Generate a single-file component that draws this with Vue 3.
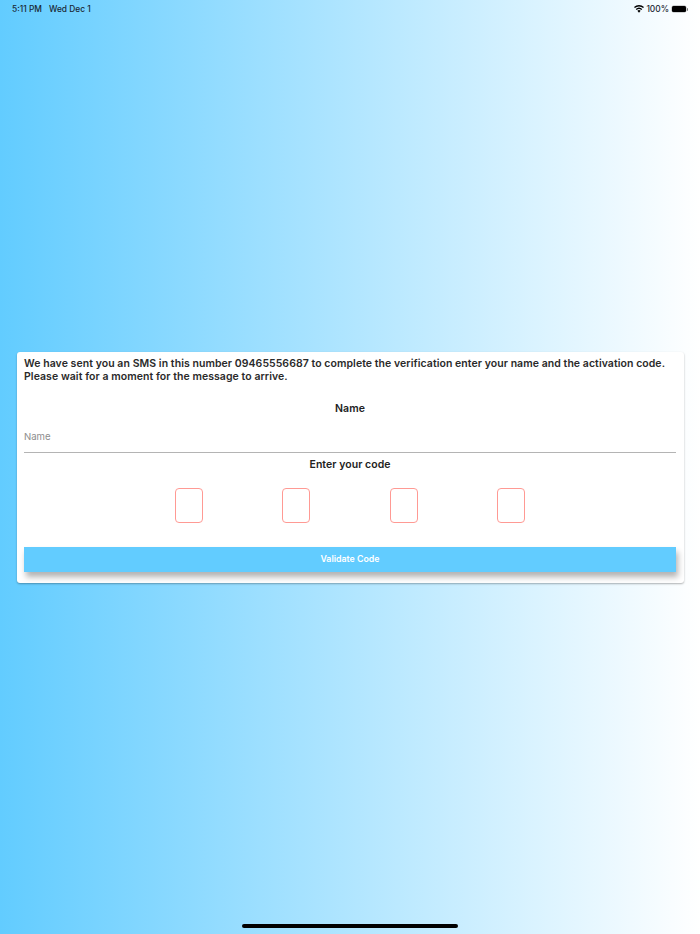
<script setup>
const boxes = [1, 2, 3, 4]
</script>

<template>
  <div class="page">
    <div class="status">
      <div class="status-left"><span>5:11 PM</span><span>Wed Dec 1</span></div>
      <div class="status-right">
        <svg class="wifi" width="10" height="8" viewBox="0 0 11 8">
          <path d="M5.5 8 3.7 5.9a2.7 2.7 0 0 1 3.6 0Z" fill="#000" />
          <path d="M1.9 3.9a5.3 5.3 0 0 1 7.2 0L8.1 5.1a3.8 3.8 0 0 0-5.2 0Z" fill="#000" />
          <path d="M0 1.9a8 8 0 0 1 11 0L10 3a6.5 6.5 0 0 0-9 0Z" fill="#000" />
        </svg>
        <span class="pct">100%</span>
        <span class="battery"></span>
        <span class="nub"></span>
      </div>
    </div>

    <div class="card">
      <p class="intro">We have sent you an SMS in this number 09465556687 to complete the verification enter your name and the activation code. Please wait for a moment for the message to arrive.</p>
      <h2 class="name-title">Name</h2>
      <input class="name-input" type="text" placeholder="Name" />
      <h2 class="code-title">Enter your code</h2>
      <div class="codes">
        <div class="code-cell" v-for="b in boxes" :key="b"><span class="code-box"></span></div>
      </div>
      <button class="validate">Validate Code</button>
    </div>

    <div class="home"></div>
  </div>
</template>

<style>
html, body { margin: 0; padding: 0; }
</style>

<style scoped>
.page {
  position: relative;
  width: 700px;
  height: 934px;
  overflow: hidden;
  display: flex;
  align-items: center;
  padding: 0 16px 0 17px;
  box-sizing: border-box;
  background: linear-gradient(90deg, #62ccff 0%, #ffffff 100%);
  font-family: Inter, "Liberation Sans", sans-serif;
  color: #222;
}
.status {
  position: absolute;
  top: 3px;
  left: 12px;
  right: 12px;
  height: 11px;
  display: flex;
  justify-content: space-between;
  align-items: center;
  font-size: 8.4px;
  line-height: 11px;
  font-weight: 500;
  color: #1a2733;
}
.status-left { display: flex; gap: 7px; padding-top: 1px; }
.status-right { display: flex; align-items: center; gap: 2px; padding-top: 1px; }
.pct { font-size: 8.4px; }
.battery {
  width: 14px;
  height: 6px;
  background: #000;
  border-radius: 1.5px;
  margin-left: 1px;
  box-shadow: 0 0 0 0.5px #00000055;
}
.nub { width: 1px; height: 3px; background: #777; margin-left: -1px; border-radius: 0 1px 1px 0; }
.card {
  flex: 1;
  height: 231px;
  box-sizing: border-box;
  background: #fff;
  border-radius: 3px;
  padding: 5px 8px 0 7px;
  box-shadow: 0 1px 2px rgba(0, 0, 0, 0.3);
}
.intro {
  margin: 0;
  font-size: 10.5px;
  line-height: 13px;
  font-weight: 600;
  letter-spacing: 0.06px;
  color: #2a2a2a;
}
.name-title, .code-title {
  margin: 0;
  text-align: center;
  font-size: 10.5px;
  line-height: 14px;
  font-weight: 600;
  letter-spacing: 0.05px;
  color: #222;
}
.name-title { margin-top: 19px; }
.name-input {
  display: block;
  width: 100%;
  box-sizing: border-box;
  height: 31px;
  margin-top: 6px;
  padding: 0;
  border: none;
  border-bottom: 1px solid #b4b4b4;
  outline: none;
  background: transparent;
  font-family: inherit;
  font-size: 9.6px;
}
.name-input::placeholder { color: #8d8d8d; opacity: 1; }
.code-title { margin-top: 5px; }
.codes {
  display: flex;
  justify-content: center;
  margin-top: 16px;
}
.code-cell {
  width: 107.5px;
  display: flex;
  justify-content: center;
}
.code-box {
  display: block;
  width: 28px;
  height: 35px;
  box-sizing: border-box;
  border: 1px solid #ff9a94;
  border-radius: 4px;
}
.validate {
  display: block;
  width: 100%;
  height: 25px;
  margin-top: 24px;
  border: none;
  padding: 0 0 1px;
  background: #62ccff;
  color: #fff;
  font-family: inherit;
  font-size: 8.8px;
  font-weight: 600;
  box-shadow: 2px 5px 6px rgba(0, 0, 0, 0.3);
}
.home {
  position: absolute;
  left: 242px;
  bottom: 6px;
  width: 216px;
  height: 4px;
  border-radius: 2px;
  background: #000;
}
</style>
